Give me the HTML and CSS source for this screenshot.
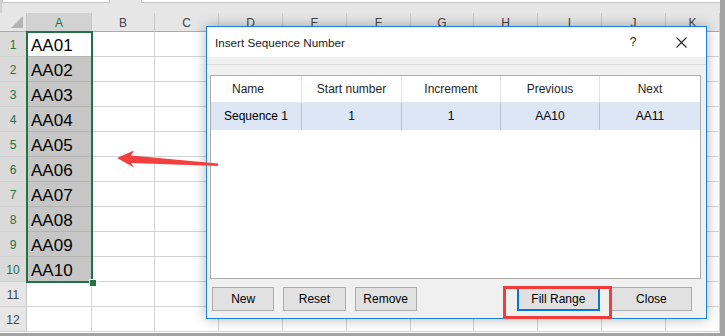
FILE: index.html
```html
<!DOCTYPE html>
<html lang="en">
<head>
  <meta charset="UTF-8" />
  <title>Insert Sequence Number</title>
  <link rel="stylesheet" href="styles.css">
</head>
<body>
  <div class="screen">
    <div class="topbar">
      <div class="namebox"></div>
      <div class="fxbox"></div>
    </div>

    <div class="sheet">
      <div class="corner"><span class="tri"></span></div>
      <div class="ch on">A</div><div class="ch">B</div><div class="ch">C</div><div class="ch">D</div><div class="ch">E</div><div class="ch">F</div><div class="ch">G</div><div class="ch">H</div><div class="ch">I</div><div class="ch">J</div><div class="ch">K</div>

      <div class="rh on">1</div><div class="c val first">AA01</div><div class="c"></div><div class="c"></div><div class="c"></div><div class="c"></div><div class="c"></div><div class="c"></div><div class="c"></div><div class="c"></div><div class="c"></div><div class="c"></div>
      <div class="rh on">2</div><div class="c val">AA02</div><div class="c"></div><div class="c"></div><div class="c"></div><div class="c"></div><div class="c"></div><div class="c"></div><div class="c"></div><div class="c"></div><div class="c"></div><div class="c"></div>
      <div class="rh on">3</div><div class="c val">AA03</div><div class="c"></div><div class="c"></div><div class="c"></div><div class="c"></div><div class="c"></div><div class="c"></div><div class="c"></div><div class="c"></div><div class="c"></div><div class="c"></div>
      <div class="rh on">4</div><div class="c val">AA04</div><div class="c"></div><div class="c"></div><div class="c"></div><div class="c"></div><div class="c"></div><div class="c"></div><div class="c"></div><div class="c"></div><div class="c"></div><div class="c"></div>
      <div class="rh on">5</div><div class="c val">AA05</div><div class="c"></div><div class="c"></div><div class="c"></div><div class="c"></div><div class="c"></div><div class="c"></div><div class="c"></div><div class="c"></div><div class="c"></div><div class="c"></div>
      <div class="rh on">6</div><div class="c val">AA06</div><div class="c"></div><div class="c"></div><div class="c"></div><div class="c"></div><div class="c"></div><div class="c"></div><div class="c"></div><div class="c"></div><div class="c"></div><div class="c"></div>
      <div class="rh on">7</div><div class="c val">AA07</div><div class="c"></div><div class="c"></div><div class="c"></div><div class="c"></div><div class="c"></div><div class="c"></div><div class="c"></div><div class="c"></div><div class="c"></div><div class="c"></div>
      <div class="rh on">8</div><div class="c val">AA08</div><div class="c"></div><div class="c"></div><div class="c"></div><div class="c"></div><div class="c"></div><div class="c"></div><div class="c"></div><div class="c"></div><div class="c"></div><div class="c"></div>
      <div class="rh on">9</div><div class="c val">AA09</div><div class="c"></div><div class="c"></div><div class="c"></div><div class="c"></div><div class="c"></div><div class="c"></div><div class="c"></div><div class="c"></div><div class="c"></div><div class="c"></div>
      <div class="rh on">10</div><div class="c val">AA10</div><div class="c"></div><div class="c"></div><div class="c"></div><div class="c"></div><div class="c"></div><div class="c"></div><div class="c"></div><div class="c"></div><div class="c"></div><div class="c"></div>
      <div class="rh">11</div><div class="c"></div><div class="c"></div><div class="c"></div><div class="c"></div><div class="c"></div><div class="c"></div><div class="c"></div><div class="c"></div><div class="c"></div><div class="c"></div><div class="c"></div>
      <div class="rh">12</div><div class="c"></div><div class="c"></div><div class="c"></div><div class="c"></div><div class="c"></div><div class="c"></div><div class="c"></div><div class="c"></div><div class="c"></div><div class="c"></div><div class="c"></div>
    </div>

    <!-- selected range A1:A10 -->
    <div class="selection"><span class="handle"></span></div>

    <div class="dialog">
      <div class="titlebar">
        <span class="title">Insert Sequence Number</span>
        <span class="help">?</span>
        <svg class="close-x" width="11" height="11" viewBox="0 0 11 11">
          <path d="M0.5 0.5 L10.5 10.5 M10.5 0.5 L0.5 10.5" stroke="#222" stroke-width="1.1" fill="none" />
        </svg>
      </div>
      <div class="body">
        <div class="listbox">
          <div class="lrow head">
            <span class="name">Name</span><span>Start number</span><span>Increment</span><span>Previous</span><span>Next</span>
          </div>
          <div class="lrow item">
            <span>Sequence 1</span><span>1</span><span>1</span><span>AA10</span><span>AA11</span>
          </div>
        </div>
        <div class="buttons">
          <button>New</button>
          <button>Reset</button>
          <button>Remove</button>
          <button class="fill">Fill Range</button>
          <button class="close">Close</button>
        </div>
      </div>
    </div>

    <svg class="arrow" width="725" height="336" viewBox="0 0 725 336">
      <polygon points="117,158 134,150.5 131,155.5 218,163.5 218,166 131,163 134,167.5" fill="#f43f3f" />
    </svg>
    <div class="callout"></div>
  </div>
</body>
</html>
```

FILE: styles.css
```css
body {
  margin: 0;
  background: #a3a3a3;
  font-family: "Liberation Sans", Arial, sans-serif;
}
.screen {
  position: relative;
  width: 720px;
  height: 333px;
  background: #fff;
  overflow: hidden;
}
.topbar {
  height: 13px;
  background: #e6e6e6;
  display: flex;
  align-items: flex-start;
  border-left: 2px solid #d0d0d0;
  box-sizing: border-box;
}
.namebox {
  width: 106px;
  height: 2px;
  background: #fff;
  border: 1px solid #c6c6c6;
  border-top: none;
}
.fxbox {
  flex: 1;
  height: 2px;
  margin-left: 31px;
  background: #fff;
  border: 1px solid #c6c6c6;
  border-top: none;
  border-right: none;
}
.sheet {
  display: grid;
  grid-template-columns: 27px 65px 63px 64px 64px 64px 64px 63px 64px 64px 64px 54px;
  grid-template-rows: 19px repeat(12, 25px);
}
.sheet > div {
  box-sizing: border-box;
}
.corner {
  position: relative;
  background: #e6e6e6;
  border-right: 1px solid #c6c6c6;
  border-bottom: 1px solid #ababab;
}
.tri {
  position: absolute;
  right: 3px;
  bottom: 3px;
  width: 12px;
  height: 12px;
  background: #b4b4b4;
  clip-path: polygon(100% 0, 100% 100%, 0 100%);
}
.ch {
  background: #e6e6e6;
  border-right: 1px solid #c8c8c8;
  border-bottom: 1px solid #ababab;
  color: #444;
  font-size: 12px;
  line-height: 20px;
  text-align: center;
}
.ch.on {
  background: #d2d2d2;
  color: #217346;
}
.rh {
  background: #e6e6e6;
  border-right: 1px solid #c6c6c6;
  border-bottom: 1px solid #d0d0d0;
  color: #444;
  font-size: 12px;
  line-height: 26px;
  text-align: center;
}
.rh.on {
  background: #dadada;
  color: #217346;
}
.c {
  border-right: 1px solid #d4d4d4;
  border-bottom: 1px solid #d4d4d4;
}
.val {
  background: #c6c6c6;
  font-size: 17px;
  line-height: 27px;
  padding-left: 4px;
  color: #000;
  border-color: #b4b4b4;
}
.val.first {
  background: #fff;
}
.selection {
  position: absolute;
  left: 26px;
  top: 31px;
  width: 63px;
  height: 248px;
  border: 2px solid #217346;
}
.handle {
  position: absolute;
  right: -6px;
  bottom: -6px;
  width: 6px;
  height: 6px;
  background: #217346;
  border: 1px solid #fff;
}
.dialog {
  position: absolute;
  left: 206px;
  top: 26px;
  width: 499px;
  height: 291px;
  border: 1px solid #1883d7;
  background: #f0f0f0;
  box-shadow: 0 0 12px rgba(0, 0, 0, 0.3);
  display: flex;
  flex-direction: column;
  font-size: 12px;
  color: #000;
}
.titlebar {
  height: 30px;
  background: #fff;
  display: flex;
  align-items: center;
  padding-left: 8px;
  color: #222;
}
.title {
  flex: 1;
  font-size: 11.7px;
}
.help {
  width: 14px;
  margin-right: 36px;
  text-align: center;
  font-size: 12px;
}
.close-x {
  margin-right: 19px;
}
.body {
  flex: 1;
  margin-top: 7px;
  border-top: 1px solid #dcdcdc;
  padding: 10px 5px 0 3px;
}
.listbox {
  height: 202px;
  background: #fff;
  border: 1px solid #acacac;
}
.lrow {
  display: grid;
  grid-template-columns: 91px 100px 99px 99px 1fr;
}
.lrow span {
  text-align: center;
  border-right: 1px solid #e3e3e3;
}
.lrow span:last-child {
  border-right: none;
}
.head {
  height: 26px;
  line-height: 26px;
  color: #1e1e1e;
}
.head .name {
  padding-right: 16px;
}
.item {
  height: 27px;
  line-height: 26px;
  background: #dce6f4;
  border-top: 1px solid #e0e6ef;
}
.item span {
  border-right-color: #b9c2cf;
}
.buttons {
  display: flex;
  margin-top: 8px;
  padding-left: 2px;
}
button {
  font-family: inherit;
  font-size: 12px;
  color: #000;
  height: 24px;
  background: #e1e1e1;
  border: 1px solid #adadad;
  padding: 0;
  margin-right: 9px;
  width: 63px;
}
button.fill {
  width: 84px;
  margin-left: 91px;
  margin-right: 11px;
  border: 2px solid #0078d7;
}
button.close {
  width: 82px;
}
.arrow {
  position: absolute;
  left: 0;
  top: 0;
}
.callout {
  position: absolute;
  left: 503px;
  top: 286px;
  width: 103px;
  height: 27px;
  border: 3px solid #f23c3c;
}
```
